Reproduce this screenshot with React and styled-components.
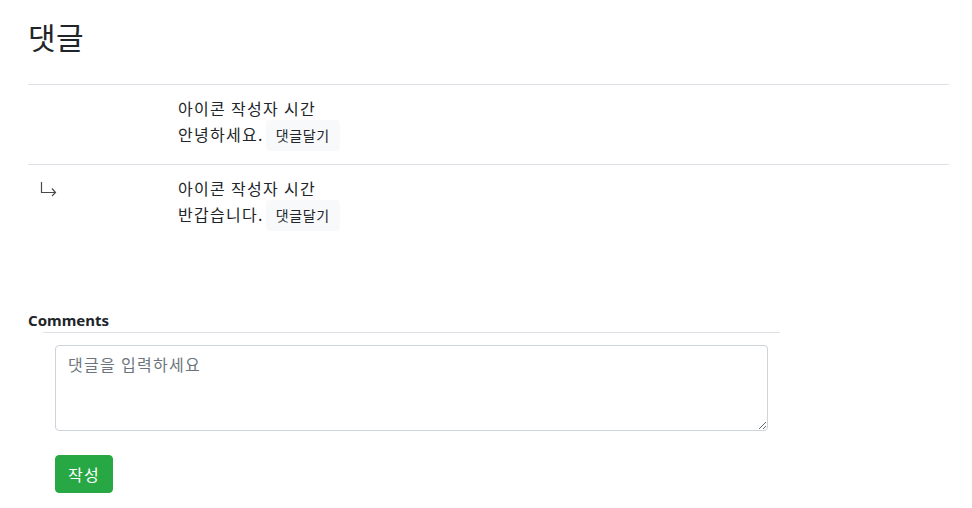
import React from "react";
import styled, { createGlobalStyle } from "styled-components";

const GlobalStyle = createGlobalStyle`
  html, body {
    margin: 0;
    background: #fff;
    color: #212529;
    font-family: "Noto Sans CJK KR", "Noto Sans", sans-serif;
    font-size: 16px;
    line-height: 1.5;
  }
  * {
    box-sizing: border-box;
  }
`;

const comments = [
  { id: 1, reply: false, body: "안녕하세요." },
  { id: 2, reply: true, body: "반갑습니다." },
];

const ReplyArrow = () => (
  <svg width="17" height="16" viewBox="0 0 17 16" fill="none">
    <path d="M1.5 1V11.5H15.5" stroke="#4a4a4a" strokeWidth="1.2" />
    <path d="M12 7.5L15.5 11.5L12 15" stroke="#4a4a4a" strokeWidth="1.2" />
  </svg>
);

const App = () => {
  return (
    <Page>
      <GlobalStyle />
      <Title>댓글</Title>
      <CommentList>
        {comments.map((c) => (
          <CommentRow key={c.id}>
            <Indent>{c.reply && <ReplyArrow />}</Indent>
            <CommentBody>
              <Meta>아이콘 작성자 시간</Meta>
              <BodyLine>
                <span>{c.body}</span>
                <ReplyButton type="button">댓글달기</ReplyButton>
              </BodyLine>
            </CommentBody>
          </CommentRow>
        ))}
      </CommentList>

      <FormSection>
        <FormLabel>Comments</FormLabel>
        <FormBox>
          <TextArea placeholder="댓글을 입력하세요" />
          <SubmitButton type="button">작성</SubmitButton>
        </FormBox>
      </FormSection>
    </Page>
  );
};

export default App;

const Page = styled.div`
  padding: 18px 23px 0 28px;
`;

const Title = styled.h2`
  margin: 0 0 30px;
  font-size: 30px;
  font-weight: 400;
  line-height: 36px;
  letter-spacing: 0.5px;
`;

const CommentList = styled.div`
  display: flex;
  flex-direction: column;
`;

const CommentRow = styled.div`
  display: grid;
  grid-template-columns: 150px 1fr;
  height: 80px;
  padding-top: 11px;
  border-top: 1px solid #dee2e6;
`;

const Indent = styled.div`
  padding: 2px 0 0 12px;
`;

const CommentBody = styled.div`
  display: flex;
  flex-direction: column;
  letter-spacing: 1.3px;
`;

const Meta = styled.div`
  line-height: 24px;
`;

const BodyLine = styled.div`
  display: flex;
  align-items: baseline;
  gap: 2px;
  line-height: 24px;
`;

const ReplyButton = styled.button`
  font-family: inherit;
  font-size: 14px;
  line-height: 21px;
  letter-spacing: 0.6px;
  padding: 5px 10px;
  border: 0;
  border-radius: 4px;
  background: #f8f9fa;
  color: #212529;
`;

const FormSection = styled.div`
  margin-top: 64px;
`;

const FormLabel = styled.div`
  font-family: "Noto Sans", sans-serif;
  font-weight: 700;
  font-size: 15px;
  line-height: 24px;
`;

const FormBox = styled.div`
  margin-left: 15px;
  width: 737px;
  padding: 12px;
  border-top: 1px solid #dee2e6;
`;

const TextArea = styled.textarea`
  display: block;
  width: 100%;
  height: 86px;
  margin-bottom: 24px;
  padding: 6px 12px;
  font-family: inherit;
  font-size: 16px;
  line-height: 24px;
  letter-spacing: 1.3px;
  color: #212529;
  border: 1px solid #ced4da;
  border-radius: 4px;

  &::placeholder {
    color: #6c757d;
  }
`;

const SubmitButton = styled.button`
  font-family: inherit;
  font-size: 16px;
  line-height: 24px;
  letter-spacing: 1.3px;
  padding: 6px 12px;
  border: 1px solid #28a745;
  border-radius: 4px;
  background: #28a745;
  color: #fff;
`;
